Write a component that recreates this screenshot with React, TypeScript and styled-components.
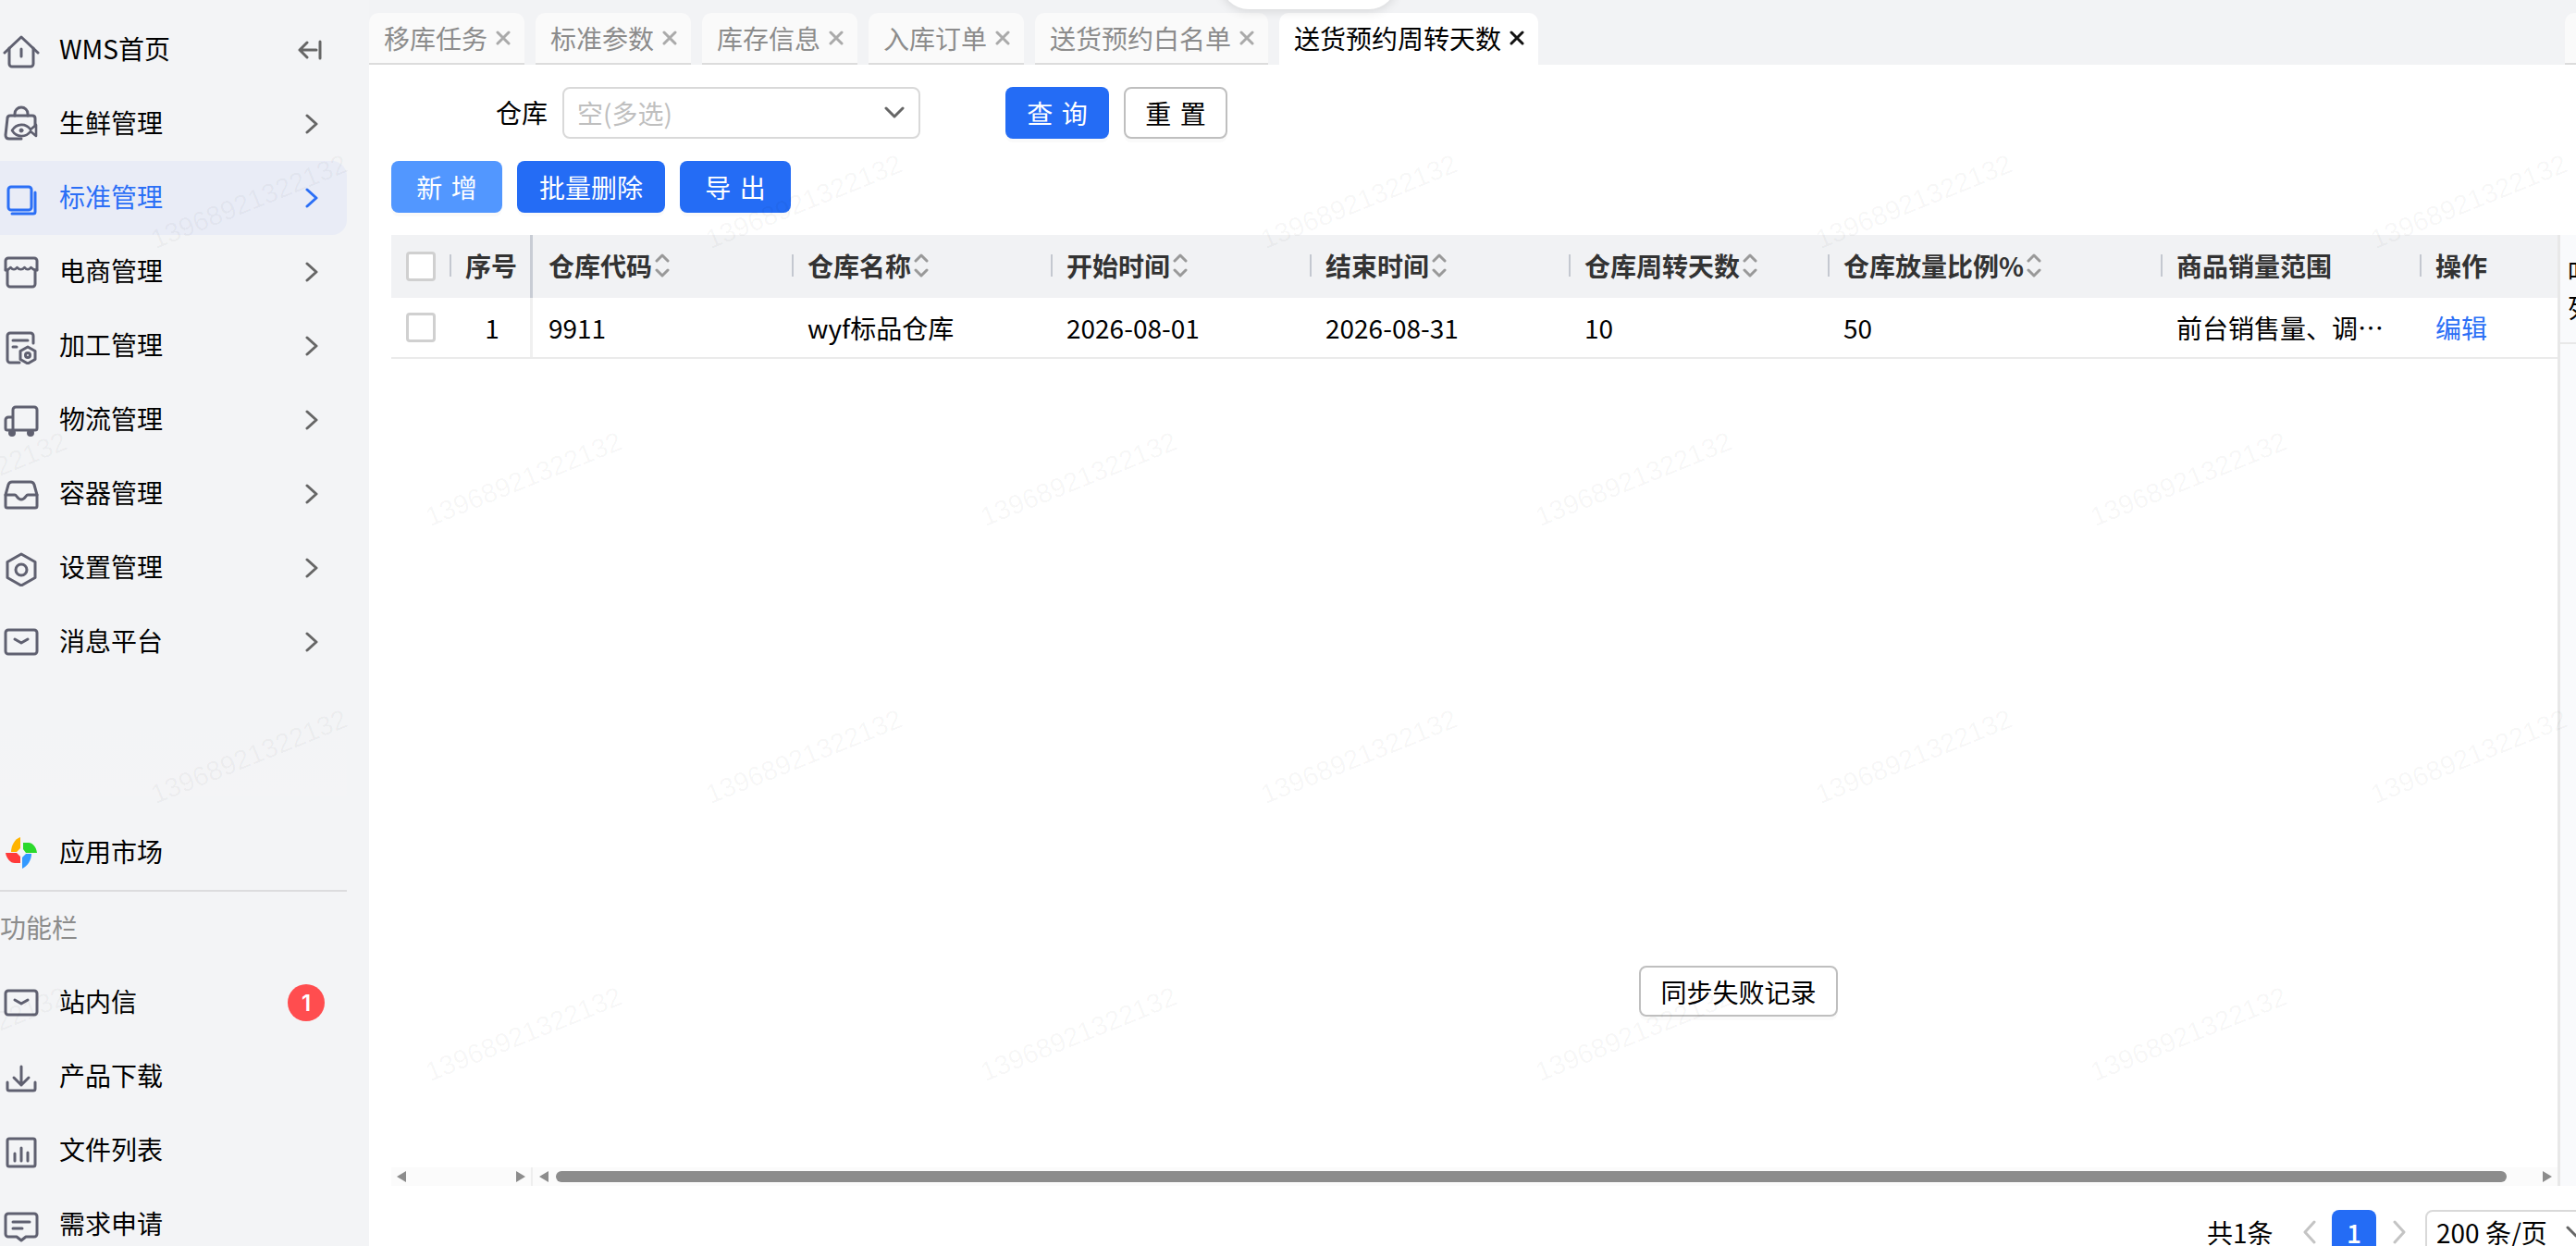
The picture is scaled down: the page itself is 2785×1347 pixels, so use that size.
import styled, { createGlobalStyle } from 'styled-components';
import type { ReactNode } from 'react';

const GlobalStyle = createGlobalStyle`
  html, body {
    margin: 0;
    padding: 0;
    background: #fff;
    overflow: hidden;
  }
  * {
    box-sizing: border-box;
  }
  body {
    font-family: 'Noto Sans CJK SC', 'Noto Sans', sans-serif;
    font-size: 28px;
    color: #000;
  }
`;

const Page = styled('div')`
  position: relative;
  display: flex;
  width: 2785px;
  height: 1347px;
  overflow: hidden;
`;

/* sidebar */
const Sidebar = styled('aside')`
  flex: 0 0 399px;
  height: 1347px;
  padding-top: 14px;
  background: #f3f4f6;
  overflow: hidden;
`;

const NavItem = styled('div')<{ $active?: boolean }>`
  display: flex;
  align-items: center;
  width: 375px;
  height: 80px;
  padding-left: 3px;
  border-radius: 0 16px 16px 0;
  color: ${(p) => (p.$active ? '#2b6ff6' : '#000')};
  background: ${(p) => (p.$active ? '#e9ecf6' : 'transparent')};
`;

const NavIcon = styled('svg')`
  flex: 0 0 40px;
  width: 40px;
  height: 40px;
  margin-right: 21px;
  fill: none;
  stroke: currentColor;
  stroke-width: 3;
  stroke-linecap: round;
  stroke-linejoin: round;
`;

const IconTone = styled('span')<{ $active?: boolean }>`
  display: flex;
  color: ${(p) => (p.$active ? '#2b6ff6' : '#5f6070')};
`;

const NavLabel = styled('span')`
  flex: 1;
  padding-bottom: 4px;
  white-space: nowrap;
`;

const NavArrow = styled('svg')`
  width: 14px;
  height: 22px;
  margin-right: 31px;
  fill: none;
  stroke: currentColor;
  stroke-width: 3;
  stroke-linecap: round;
  stroke-linejoin: round;
`;

const ArrowTone = styled('span')<{ $active?: boolean }>`
  display: flex;
  color: ${(p) => (p.$active ? '#2b6ff6' : '#666')};
`;

const CollapseIcon = styled('svg')`
  width: 26px;
  height: 22px;
  margin-right: 27px;
  fill: none;
  stroke: #666;
  stroke-width: 3;
  stroke-linecap: round;
  stroke-linejoin: round;
`;

const SideFade = styled('div')`
  width: 375px;
  height: 148px;
  background: linear-gradient(to bottom, #f3f4f6 0, #f3f4f6 50px, #f4f4f6 126px, #f3f4f6 127px);
`;

const SideDivider = styled('div')`
  width: 375px;
  height: 2px;
  background: #dcdcde;
`;

const SideTitle = styled('div')`
  display: flex;
  align-items: center;
  height: 80px;
  padding-bottom: 4px;
  color: #8c8c8c;
`;

const Badge = styled('span')`
  display: flex;
  align-items: center;
  justify-content: center;
  width: 40px;
  height: 40px;
  margin-right: 24px;
  border-radius: 50%;
  background: #ff4d4f;
  color: #fff;
  font-family: Inter, sans-serif;
  font-size: 24px;
  font-weight: 600;
`;

/* main */
const Main = styled('main')`
  flex: 1;
  min-width: 0;
  display: flex;
  flex-direction: column;
  background: #fff;
`;

const TabStrip = styled('div')`
  display: flex;
  flex-shrink: 0;
  gap: 12px;
  height: 70px;
  padding-top: 14px;
  background: #f2f3f5;
  overflow: hidden;
`;

const Tab = styled('div')<{ $active?: boolean }>`
  display: flex;
  align-items: center;
  gap: 9px;
  flex-shrink: 0;
  height: 56px;
  padding: 0 15px ${(p) => (p.$active ? '2px' : '0')} 16px;
  border-radius: 10px 10px 0 0;
  background: ${(p) => (p.$active ? '#fff' : '#fafafa')};
  border-bottom: ${(p) => (p.$active ? 'none' : '2px solid #dcdcdc')};
  color: ${(p) => (p.$active ? '#000' : '#8c8c8c')};
  white-space: nowrap;
`;

const TabStub = styled(Tab)`
  width: 30px;
  margin-left: auto;
  margin-right: -19px;
`;

const TabClose = styled('svg')<{ $active?: boolean }>`
  width: 16px;
  height: 16px;
  fill: none;
  stroke: ${(p) => (p.$active ? '#111' : '#aaa')};
  stroke-width: 3;
  stroke-linecap: round;
`;

const TopPill = styled('div')`
  position: absolute;
  left: 1320px;
  top: -30px;
  width: 190px;
  height: 40px;
  border-radius: 0 0 30px 30px;
  background: #fff;
  box-shadow: 0 2px 12px rgba(0, 0, 0, 0.12);
`;

const Content = styled('div')`
  flex: 1;
  min-height: 0;
  display: flex;
  flex-direction: column;
`;

const FilterRow = styled('div')`
  display: flex;
  flex-shrink: 0;
  align-items: center;
  margin-top: 24px;
  padding-left: 137px;
  height: 56px;
`;

const FilterLabel = styled('label')`
  margin-right: 16px;
  padding-bottom: 3px;
`;

const SelectBox = styled('div')`
  display: flex;
  align-items: center;
  justify-content: space-between;
  width: 387px;
  height: 56px;
  margin-right: 92px;
  padding: 0 15px 0 14px;
  border: 2px solid #d9d9d9;
  border-radius: 8px;
  color: #bfbfbf;
`;

const Caret = styled('svg')`
  flex-shrink: 0;
  width: 22px;
  height: 14px;
  fill: none;
  stroke: #666;
  stroke-width: 3;
  stroke-linecap: round;
  stroke-linejoin: round;
`;

const Button = styled('button')<{ $kind?: 'primary' | 'light' | 'plain'; $wide?: boolean; $w: number }>`
  display: inline-flex;
  align-items: center;
  justify-content: center;
  width: ${(p) => p.$w}px;
  height: 56px;
  padding: 0;
  font: inherit;
  border-radius: 8px;
  border: ${(p) => (p.$kind === 'plain' ? '2px solid #bfbfbf' : 'none')};
  color: ${(p) => (p.$kind === 'plain' ? '#000' : '#fff')};
  background: ${(p) => (p.$kind === 'plain' ? '#fff' : p.$kind === 'light' ? '#5297ff' : '#246cf5')};
  box-shadow: 0 4px 0 rgba(0, 0, 0, 0.02);
  letter-spacing: ${(p) => (p.$wide ? '0.34em' : '0')};
  text-indent: ${(p) => (p.$wide ? '0.34em' : '0')};
`;

const FilterButtons = styled('div')`
  display: flex;
  gap: 16px;
`;

const ActionRow = styled('div')`
  display: flex;
  flex-shrink: 0;
  gap: 16px;
  margin-top: 24px;
  padding-left: 24px;
`;

const TableArea = styled('div')`
  display: flex;
  flex-shrink: 0;
  height: 1028px;
  margin-top: 24px;
  padding-left: 24px;
  overflow: hidden;
`;

const TableColumn = styled('div')`
  width: 2342px;
  display: flex;
  flex-direction: column;
`;

const columns = '63px 90px 280px 280px 280px 280px 280px 360px 280px 149px';

const HeadRow = styled('div')`
  display: grid;
  grid-template-columns: ${columns};
  height: 68px;
  background: #f1f2f4;
  color: #333;
  font-weight: 700;
`;

const BodyRow = styled('div')`
  display: grid;
  grid-template-columns: ${columns};
  height: 66px;
  border-bottom: 2px solid #ebebeb;
`;

const Cell = styled('div')`
  position: relative;
  display: flex;
  align-items: center;
  padding-left: 17px;
  white-space: nowrap;
`;

const HeadCell = styled(Cell)<{ $noBar?: boolean }>`
  padding-bottom: 2px;
  &::before {
    content: '';
    display: ${(p) => (p.$noBar ? 'none' : 'block')};
    position: absolute;
    left: 0;
    top: 21px;
    width: 2px;
    height: 24px;
    background: #c4c8d0;
  }
`;

const CheckCell = styled('div')`
  display: flex;
  align-items: center;
  padding-left: 16px;
`;

const CheckBox = styled('span')`
  width: 32px;
  height: 32px;
  border: 3px solid #d0d0d0;
  border-radius: 4px;
  background: #fff;
`;

const IndexHead = styled(HeadCell)`
  justify-content: center;
  padding-left: 0;
  box-shadow: inset -3px 0 0 #c8ccd4;
`;

const IndexBody = styled(Cell)`
  justify-content: center;
  padding-left: 2px;
  box-shadow: inset -3px 0 0 #f0f0f0;
`;

const SortIcon = styled('svg')`
  width: 16px;
  height: 26px;
  margin-left: 3px;
  fill: none;
  stroke: #999;
  stroke-width: 3;
  stroke-linecap: round;
  stroke-linejoin: round;
`;

const Ellipsis = styled('span')`
  display: block;
  width: 226px;
  overflow: hidden;
  text-overflow: ellipsis;
`;

const EditLink = styled('a')`
  color: #2b6ff6;
`;

const TableSpace = styled('div')`
  flex: 1;
`;

const ScrollBar = styled('div')`
  display: flex;
  flex-shrink: 0;
  height: 20px;
  background: #fbfbfb;
`;

const ScrollFixed = styled('div')`
  display: flex;
  align-items: center;
  justify-content: space-between;
  width: 153px;
  padding: 0 6px;
  border-right: 2px solid #eeeeee;
`;

const ScrollTrack = styled('div')`
  flex: 1;
  display: flex;
  align-items: center;
  padding: 0 6px 0 7px;
`;

const ScrollThumb = styled('div')`
  width: 2109px;
  height: 12px;
  margin-left: 8px;
  border-radius: 6px;
  background: #8c8c8c;
`;

const ScrollArrow = styled('span')<{ $right?: boolean }>`
  width: 0;
  height: 0;
  border-top: 6px solid transparent;
  border-bottom: 6px solid transparent;
  border-left: ${(p) => (p.$right ? '10px solid #8c8c8c' : 'none')};
  border-right: ${(p) => (p.$right ? 'none' : '10px solid #8c8c8c')};
  margin-left: ${(p) => (p.$right ? 'auto' : '0')};
`;

const SidePanel = styled('div')`
  flex: 0 0 20px;
  border-left: 3px solid #e8e8e8;
  background: #f9fafc;
  overflow: hidden;
`;

const SidePanelHead = styled('div')`
  width: 60px;
  height: 118px;
  padding: 20px 0 0 8px;
  border-bottom: 2px solid #e8e8e8;
  line-height: 39px;
`;

const SidePanelText = styled('span')`
  display: block;
  width: 28px;
`;

const Pagination = styled('div')`
  display: flex;
  flex-shrink: 0;
  align-items: flex-start;
  padding: 26px 0 0 1987px;
  white-space: nowrap;
  & > * {
    flex-shrink: 0;
  }
`;

const PageTotal = styled('span')`
  display: flex;
  align-items: center;
  height: 48px;
  width: 104px;
`;

const PageArrow = styled('svg')`
  width: 14px;
  height: 26px;
  margin-top: 11px;
  fill: none;
  stroke: #c4c4c4;
  stroke-width: 3;
  stroke-linecap: round;
  stroke-linejoin: round;
`;

const PageCurrent = styled('span')`
  display: flex;
  align-items: center;
  justify-content: center;
  width: 48px;
  height: 48px;
  margin: 0 18px 0 17px;
  border-radius: 8px;
  background: #246cf5;
  color: #fff;
  font-weight: 500;
`;

const PageSize = styled('div')`
  display: flex;
  align-items: center;
  gap: 20px;
  width: 200px;
  height: 56px;
  margin-left: 21px;
  padding: 0 0 8px 10px;
  border: 2px solid #d9d9d9;
  border-radius: 8px;
`;

const FloatButton = styled(Button)`
  position: absolute;
  left: 1772px;
  top: 1044px;
  height: 55px;
`;

/* watermark */
const Watermark = styled('div')`
  position: absolute;
  inset: 0;
  overflow: hidden;
  pointer-events: none;
`;

const WatermarkText = styled('span')`
  position: absolute;
  font-family: 'Liberation Sans', Arial, sans-serif;
  font-size: 29px;
  line-height: 29px;
  color: rgba(0, 0, 0, 0.04);
  white-space: nowrap;
  transform: rotate(-22deg);
  transform-origin: left bottom;
`;

const Icon = ({ children }: { children: ReactNode }) => <NavIcon viewBox='0 0 40 40'>{children}</NavIcon>;

const icons: Record<string, ReactNode> = {
  home: (
    <Icon>
      <path d='M2 23 20 6l18 17' />
      <path d='M7 18v17a3 3 0 0 0 3 3h20a3 3 0 0 0 3-3V18' />
      <path d='M20 19v8' />
    </Icon>
  ),
  fresh: (
    <Icon>
      <path d='M13 11V9a7 7 0 0 1 14 0v2' />
      <path d='M20 36H7q-4 0-4-4L5 14q0-3 3-3h24q3 0 3 3v7' />
      <path d='M10 27c5-8 15-8 20-1l6-5v12l-6-5c-5 7-15 7-20-1Z' strokeWidth='2.6' />
      <circle cx='20' cy='27' r='2' fill='currentColor' strokeWidth='1' />
    </Icon>
  ),
  standard: (
    <Icon>
      <rect x='6' y='8' width='25' height='25' rx='3' />
      <path d='M35 14v21a2 2 0 0 1-2 2H10' />
    </Icon>
  ),
  shop: (
    <Icon>
      <path d='M3 18V8a3 3 0 0 1 3-3h28a3 3 0 0 1 3 3v10' />
      <path d='M5 18v15a3 3 0 0 0 3 3h24a3 3 0 0 0 3-3V18' />
      <path d='M3 18c3 0 4-1 5.500-3 2 3 5 3 7 0 2 3 6 3 8 0 2 3 5 3 7 0 1.500 2 3.500 3 6.500 3' strokeWidth='2.6' />
    </Icon>
  ),
  process: (
    <Icon>
      <path d='M33 17V9a3 3 0 0 0-3-3H8a3 3 0 0 0-3 3v26a3 3 0 0 0 3 3h10' />
      <path d='M11 14h16M11 21h4' />
      <path d='m27 21 8 4.500v9L27 39l-8-4.500v-9Z' />
      <circle cx='27' cy='30' r='2.500' />
    </Icon>
  ),
  truck: (
    <Icon>
      <path d='M11 17V9a3 3 0 0 1 3-3h20a3 3 0 0 1 3 3v20a2 2 0 0 1-2 2H5a2 2 0 0 1-2-2v-9a3 3 0 0 1 3-3h5v14' />
      <circle cx='10' cy='34' r='2.500' fill='currentColor' />
      <circle cx='30' cy='34' r='2.500' fill='currentColor' />
    </Icon>
  ),
  box: (
    <Icon>
      <path d='M10 7h20q3 0 4 3l3 11v12a2 2 0 0 1-2 2H5a2 2 0 0 1-2-2V21l3-11q1-3 4-3Z' />
      <path d='M3 21h10c2 0 3 5 7 5s5-5 7-5h10' />
    </Icon>
  ),
  setting: (
    <Icon>
      <path d='m20 5 15 8.500v17L20 39 5 30.500v-17Z' />
      <circle cx='20' cy='22' r='6' />
    </Icon>
  ),
  mail: (
    <Icon>
      <rect x='3' y='7' width='34' height='26' rx='3' />
      <path d='m13 17 7 4 7-4' />
    </Icon>
  ),
  download: (
    <Icon>
      <path d='M5 26v7a2 2 0 0 0 2 2h26a2 2 0 0 0 2-2v-7' />
      <path d='M20 9v20M12 21l8 8 8-8' />
    </Icon>
  ),
  file: (
    <Icon>
      <rect x='5' y='7' width='30' height='30' rx='2' />
      <path d='M13 23v8M20 17v14M27 22v9' />
    </Icon>
  ),
  request: (
    <Icon>
      <path d='M6 8h28a3 3 0 0 1 3 3v19a3 3 0 0 1-3 3h-9l-5 4-5-4H6a3 3 0 0 1-3-3V11a3 3 0 0 1 3-3Z' />
      <path d='M11 17h18M11 24h10' />
    </Icon>
  ),
  market: (
    <NavIcon viewBox='0 0 40 40' style={{ stroke: 'none' }}>
      <path fill='#ffb400' d='M19 3v12l-4 4H9C9 12 13 5 19 3Z' />
      <path fill='#2bd92b' d='M22 9h6c4 0 8 4 9 11H25l-3-4Z' />
      <path fill='#3399ff' d='M31 21c0 7-4 13-10 16V25l4-4Z' />
      <path fill='#ff3b3b' d='M3 20h12l4 4v7h-6C8 31 4 26 3 20Z' />
    </NavIcon>
  ),
};

const Chevron = () => (
  <NavArrow viewBox='0 0 14 22'>
    <path d='m2 2 10 9-10 9' />
  </NavArrow>
);

const Close = ({ active }: { active?: boolean }) => (
  <TabClose viewBox='0 0 16 16' $active={active}>
    <path d='m2 2 12 12M14 2 2 14' />
  </TabClose>
);

const Sort = () => (
  <SortIcon viewBox='0 0 16 26'>
    <path d='m2 8 6-6 6 6M2 18l6 6 6-6' />
  </SortIcon>
);

const menu = [
  { icon: 'fresh', label: '生鲜管理' },
  { icon: 'standard', label: '标准管理', active: true },
  { icon: 'shop', label: '电商管理' },
  { icon: 'process', label: '加工管理' },
  { icon: 'truck', label: '物流管理' },
  { icon: 'box', label: '容器管理' },
  { icon: 'setting', label: '设置管理' },
  { icon: 'mail', label: '消息平台' },
];

const tools = [
  { icon: 'download', label: '产品下载' },
  { icon: 'file', label: '文件列表' },
  { icon: 'request', label: '需求申请' },
];

const tabs = ['移库任务', '标准参数', '库存信息', '入库订单', '送货预约白名单'];

const headers = [
  { title: '仓库代码', sort: true },
  { title: '仓库名称', sort: true },
  { title: '开始时间', sort: true },
  { title: '结束时间', sort: true },
  { title: '仓库周转天数', sort: true },
  { title: '仓库放量比例%', sort: true },
  { title: '商品销量范围' },
  { title: '操作' },
];

const rowValues = ['9911', 'wyf标品仓库', '2026-08-01', '2026-08-31', '10', '50'];

const watermarks: { x: number; y: number }[] = [];
for (let row = 0; row < 5; row++) {
  for (let col = 0; col < 6; col++) {
    const shifted = row % 2 === 1;
    watermarks.push({ x: (shifted ? -133 : 170) + col * 600, y: 274 + row * 300 });
  }
}

const App = () => {
  return (
    <Page>
      <GlobalStyle />
      <Sidebar>
        <NavItem>
          <IconTone>{icons.home}</IconTone>
          <NavLabel>WMS首页</NavLabel>
          <CollapseIcon viewBox='0 0 26 22'>
            <path d='M24 2v18M20 11H2M10 3l-8 8 8 8' />
          </CollapseIcon>
        </NavItem>
        {menu.map((item) => (
          <NavItem key={item.label} $active={item.active}>
            <IconTone $active={item.active}>{icons[item.icon]}</IconTone>
            <NavLabel>{item.label}</NavLabel>
            <ArrowTone $active={item.active}>
              <Chevron />
            </ArrowTone>
          </NavItem>
        ))}
        <SideFade />
        <NavItem>
          {icons.market}
          <NavLabel>应用市场</NavLabel>
        </NavItem>
        <SideDivider />
        <SideTitle>功能栏</SideTitle>
        <NavItem>
          <IconTone>{icons.mail}</IconTone>
          <NavLabel>站内信</NavLabel>
          <Badge>1</Badge>
        </NavItem>
        {tools.map((item) => (
          <NavItem key={item.label}>
            <IconTone>{icons[item.icon]}</IconTone>
            <NavLabel>{item.label}</NavLabel>
          </NavItem>
        ))}
      </Sidebar>

      <Main>
        <TabStrip>
          {tabs.map((t) => (
            <Tab key={t}>
              {t}
              <Close />
            </Tab>
          ))}
          <Tab $active>
            送货预约周转天数
            <Close active />
          </Tab>
          <TabStub />
        </TabStrip>

        <Content>
          <FilterRow>
            <FilterLabel>仓库</FilterLabel>
            <SelectBox>
              空(多选)
              <Caret viewBox='0 0 22 14'>
                <path d='m2 2 9 9 9-9' />
              </Caret>
            </SelectBox>
            <FilterButtons>
              <Button $kind='primary' $wide $w={112}>
                查询
              </Button>
              <Button $kind='plain' $wide $w={112}>
                重置
              </Button>
            </FilterButtons>
          </FilterRow>

          <ActionRow>
            <Button $kind='light' $wide $w={120}>
              新增
            </Button>
            <Button $kind='primary' $w={160}>
              批量删除
            </Button>
            <Button $kind='primary' $wide $w={120}>
              导出
            </Button>
          </ActionRow>

          <TableArea>
            <TableColumn>
              <HeadRow>
                <CheckCell>
                  <CheckBox />
                </CheckCell>
                <IndexHead>序号</IndexHead>
                {headers.map((h) => (
                  <HeadCell key={h.title} $noBar={h.title === '仓库代码'}>
                    {h.title}
                    {h.sort && <Sort />}
                  </HeadCell>
                ))}
              </HeadRow>
              <BodyRow>
                <CheckCell>
                  <CheckBox />
                </CheckCell>
                <IndexBody>1</IndexBody>
                {rowValues.map((v) => (
                  <Cell key={v}>{v}</Cell>
                ))}
                <Cell>
                  <Ellipsis>前台销售量、调拨出库量</Ellipsis>
                </Cell>
                <Cell>
                  <EditLink>编辑</EditLink>
                </Cell>
              </BodyRow>
              <TableSpace />
              <ScrollBar>
                <ScrollFixed>
                  <ScrollArrow />
                  <ScrollArrow $right />
                </ScrollFixed>
                <ScrollTrack>
                  <ScrollArrow />
                  <ScrollThumb />
                  <ScrollArrow $right />
                </ScrollTrack>
              </ScrollBar>
            </TableColumn>
            <SidePanel>
              <SidePanelHead>
                <SidePanelText>叶列</SidePanelText>
              </SidePanelHead>
            </SidePanel>
          </TableArea>

          <Pagination>
            <PageTotal>共1条</PageTotal>
            <PageArrow viewBox='0 0 14 26'>
              <path d='M12 2 2 13l10 11' />
            </PageArrow>
            <PageCurrent>1</PageCurrent>
            <PageArrow viewBox='0 0 14 26'>
              <path d='m2 2 10 11L2 24' />
            </PageArrow>
            <PageSize>
              200 条/页
              <Caret viewBox='0 0 22 14'>
                <path d='m2 2 9 9 9-9' />
              </Caret>
            </PageSize>
          </Pagination>
        </Content>
      </Main>

      <TopPill />
      <FloatButton $kind='plain' $w={215}>
        同步失败记录
      </FloatButton>

      <Watermark>
        {watermarks.map((w) => (
          <WatermarkText key={`${w.x}-${w.y}`} style={{ left: w.x, top: w.y - 29 }}>
            13968921322132
          </WatermarkText>
        ))}
      </Watermark>
    </Page>
  );
};

export default App;
